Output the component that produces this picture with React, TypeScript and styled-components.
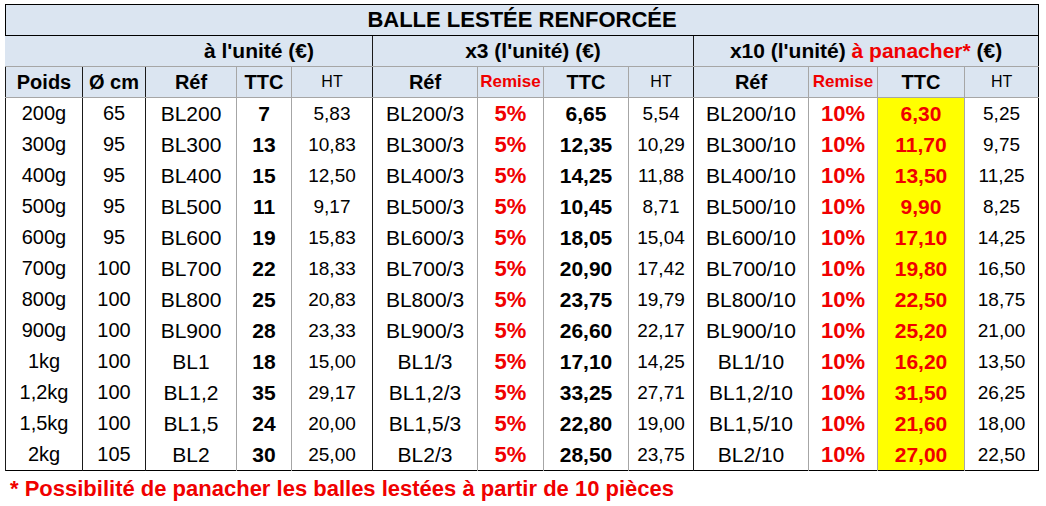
import React from "react";
import styled, { createGlobalStyle } from "styled-components";

const GlobalStyle = createGlobalStyle`
  html, body { margin: 0; padding: 0; background: #ffffff; }
  body { font-family: "Liberation Sans", Arial, sans-serif; color: #000; }
`;

const Page = styled.div`
  padding: 4px 0 0 5px;
  width: 1046px;
  height: 506px;
  box-sizing: border-box;
`;

const Table = styled.table`
  border-collapse: collapse;
  table-layout: fixed;
  width: 1034px;
  border: 1px solid #000;
`;

const Col = styled.col<{ $w: number }>`
  width: ${(p) => p.$w}px;
`;

const HEAD_BG = "#dbe5f1";
const RED = "#f00000";
const DARK = "#1a1a1a";
const LIGHT = "#a6a6a6";

const TitleCell = styled.th`
  height: 30px;
  padding: 0;
  background: ${HEAD_BG};
  border-bottom: 1px solid #000;
  font-size: 22px;
  font-weight: bold;
  text-align: center;
  line-height: 30px;
`;

const GroupCell = styled.th<{ $noLeft?: boolean }>`
  height: 30px;
  padding: 0;
  background: ${HEAD_BG};
  border-left: 1px solid ${(p) => (p.$noLeft ? HEAD_BG : DARK)};
  border-bottom: 1px solid ${LIGHT};
  font-size: 21px;
  font-weight: bold;
  text-align: center;
  white-space: nowrap;
`;

const Red = styled.span`
  color: ${RED};
`;

const HeadCell = styled.th<{ $sep: "dark" | "light"; $small?: boolean; $red?: boolean; $plain?: boolean }>`
  height: 30px;
  padding: 0;
  background: ${HEAD_BG};
  border-left: 1px solid ${(p) => (p.$sep === "dark" ? DARK : LIGHT)};
  border-bottom: 1px solid ${LIGHT};
  font-size: ${(p) => (p.$red ? "17px" : p.$small ? "16px" : "20px")};
  font-weight: ${(p) => (p.$plain ? "normal" : "bold")};
  color: ${(p) => (p.$red ? RED : "#000")};
  text-align: center;
  white-space: nowrap;
`;

type Tone = "plain" | "ref" | "bold" | "red" | "hl" | "ht";

const sizes: Record<Tone, string> = {
  plain: "20px",
  ref: "21px",
  bold: "21px",
  red: "22px",
  hl: "21px",
  ht: "19px",
};

const Cell = styled.td<{ $sep: "dark" | "light"; $tone: Tone }>`
  height: 31px;
  padding: 0;
  border-left: 1px solid ${(p) => (p.$sep === "dark" ? DARK : LIGHT)};
  text-align: center;
  white-space: nowrap;
  font-size: ${(p) => sizes[p.$tone]};
  font-weight: ${(p) => (p.$tone === "bold" || p.$tone === "red" || p.$tone === "hl" ? "bold" : "normal")};
  color: ${(p) => (p.$tone === "red" || p.$tone === "hl" ? RED : "#000")};
  background: ${(p) => (p.$tone === "hl" ? "#ffff00" : "#ffffff")};
`;

const Footnote = styled.div`
  margin: 6px 0 0 5px;
  font-size: 22px;
  font-weight: bold;
  color: ${RED};
  line-height: 24px;
`;

type Row = {
  poids: string;
  cm: string;
  ref: string;
  ttc: string;
  ht: string;
  ttc3: string;
  ht3: string;
  ttc10: string;
  ht10: string;
};

const mk = (poids: string, cm: string, ref: string, ttc: string, ht: string, ttc3: string, ht3: string, ttc10: string, ht10: string): Row => ({
  poids,
  cm,
  ref,
  ttc,
  ht,
  ttc3,
  ht3,
  ttc10,
  ht10,
});

const rows: Row[] = [
  mk("200g", "65", "BL200", "7", "5,83", "6,65", "5,54", "6,30", "5,25"),
  mk("300g", "95", "BL300", "13", "10,83", "12,35", "10,29", "11,70", "9,75"),
  mk("400g", "95", "BL400", "15", "12,50", "14,25", "11,88", "13,50", "11,25"),
  mk("500g", "95", "BL500", "11", "9,17", "10,45", "8,71", "9,90", "8,25"),
  mk("600g", "95", "BL600", "19", "15,83", "18,05", "15,04", "17,10", "14,25"),
  mk("700g", "100", "BL700", "22", "18,33", "20,90", "17,42", "19,80", "16,50"),
  mk("800g", "100", "BL800", "25", "20,83", "23,75", "19,79", "22,50", "18,75"),
  mk("900g", "100", "BL900", "28", "23,33", "26,60", "22,17", "25,20", "21,00"),
  mk("1kg", "100", "BL1", "18", "15,00", "17,10", "14,25", "16,20", "13,50"),
  mk("1,2kg", "100", "BL1,2", "35", "29,17", "33,25", "27,71", "31,50", "26,25"),
  mk("1,5kg", "100", "BL1,5", "24", "20,00", "22,80", "19,00", "21,60", "18,00"),
  mk("2kg", "105", "BL2", "30", "25,00", "28,50", "23,75", "27,00", "22,50"),
];

const widths = [77, 63, 91, 55, 81, 105, 66, 85, 65, 115, 69, 87, 74];

export default function App() {
  return (
    <>
      <GlobalStyle />
      <Page>
        <Table>
          <colgroup>
            {widths.map((w, i) => (
              <Col key={i} $w={w} />
            ))}
          </colgroup>
          <thead>
            <tr>
              <TitleCell colSpan={13}>BALLE LESTÉE RENFORCÉE</TitleCell>
            </tr>
            <tr>
              <GroupCell colSpan={2} $noLeft />
              <GroupCell colSpan={3} $noLeft>à l'unité (€)</GroupCell>
              <GroupCell colSpan={4}>x3 (l'unité) (€)</GroupCell>
              <GroupCell colSpan={4}>
                x10 (l'unité) <Red>à panacher*</Red> (€)
              </GroupCell>
            </tr>
            <tr>
              <HeadCell $sep="dark">Poids</HeadCell>
              <HeadCell $sep="dark">Ø cm</HeadCell>
              <HeadCell $sep="dark">Réf</HeadCell>
              <HeadCell $sep="light">TTC</HeadCell>
              <HeadCell $sep="light" $small $plain>HT</HeadCell>
              <HeadCell $sep="dark">Réf</HeadCell>
              <HeadCell $sep="light" $small $red>Remise</HeadCell>
              <HeadCell $sep="light">TTC</HeadCell>
              <HeadCell $sep="light" $small $plain>HT</HeadCell>
              <HeadCell $sep="dark">Réf</HeadCell>
              <HeadCell $sep="light" $small $red>Remise</HeadCell>
              <HeadCell $sep="light">TTC</HeadCell>
              <HeadCell $sep="light" $small $plain>HT</HeadCell>
            </tr>
          </thead>
          <tbody>
            {rows.map((r) => (
              <tr key={r.poids}>
                <Cell $sep="dark" $tone="plain">{r.poids}</Cell>
                <Cell $sep="dark" $tone="plain">{r.cm}</Cell>
                <Cell $sep="dark" $tone="ref">{r.ref}</Cell>
                <Cell $sep="light" $tone="bold">{r.ttc}</Cell>
                <Cell $sep="light" $tone="ht">{r.ht}</Cell>
                <Cell $sep="dark" $tone="ref">{r.ref}/3</Cell>
                <Cell $sep="light" $tone="red">5%</Cell>
                <Cell $sep="light" $tone="bold">{r.ttc3}</Cell>
                <Cell $sep="light" $tone="ht">{r.ht3}</Cell>
                <Cell $sep="dark" $tone="ref">{r.ref}/10</Cell>
                <Cell $sep="light" $tone="red">10%</Cell>
                <Cell $sep="light" $tone="hl">{r.ttc10}</Cell>
                <Cell $sep="light" $tone="ht">{r.ht10}</Cell>
              </tr>
            ))}
          </tbody>
        </Table>
        <Footnote>* Possibilité de panacher les balles lestées à partir de 10 pièces</Footnote>
      </Page>
    </>
  );
}
